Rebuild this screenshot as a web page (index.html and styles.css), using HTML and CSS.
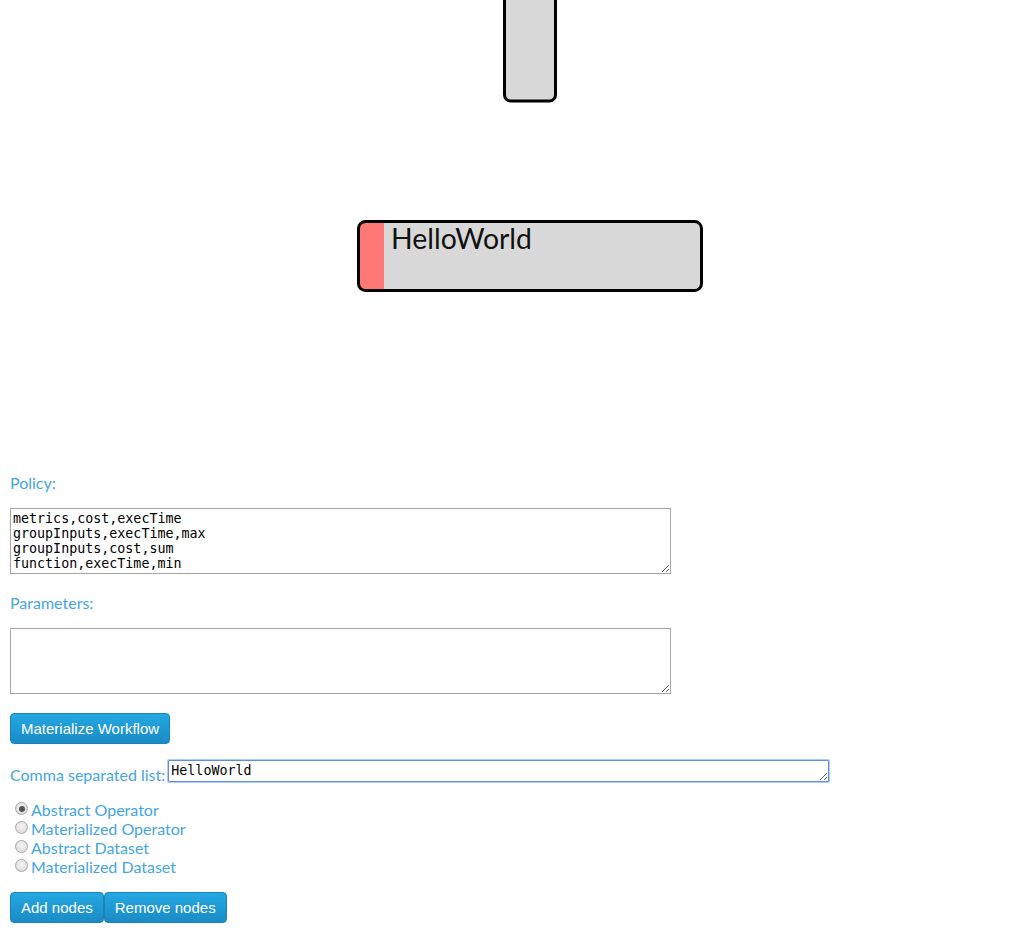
FILE: index.html
```html
<!DOCTYPE html>
<html>
<head>
<meta charset="utf-8">
<link rel="stylesheet" href="styles.css">
</head>
<body>
<div class="canvas">
  <svg class="graph" width="1028" height="463" viewBox="0 0 1028 463">
    <rect x="504.5" y="-20" width="51" height="121" rx="6" ry="6" fill="#d8d8d8" stroke="#000" stroke-width="3"/>
    <g>
      <clipPath id="nodeclip"><rect x="358.5" y="221.5" width="343" height="69" rx="7" ry="7"/></clipPath>
      <rect x="358.5" y="221.5" width="343" height="69" rx="7" ry="7" fill="#d8d8d8"/>
      <rect x="358" y="221" width="26" height="70" fill="#ff7777" clip-path="url(#nodeclip)"/>
      <rect x="358.5" y="221.5" width="343" height="69" rx="7" ry="7" fill="none" stroke="#000" stroke-width="3"/>
      <text x="391" y="249" class="nodetext">HelloWorld</text>
    </g>
  </svg>
</div>
<div class="form">
  <div class="label">Policy:</div>
  <textarea class="area" spellcheck="false">metrics,cost,execTime
groupInputs,execTime,max
groupInputs,cost,sum
function,execTime,min</textarea>
  <div class="label">Parameters:</div>
  <textarea class="area" spellcheck="false"></textarea>
  <button class="btn single">Materialize Workflow</button>
  <div class="listrow">
    <span class="label inline">Comma separated list:</span>
    <textarea class="listinput" rows="1" spellcheck="false">HelloWorld</textarea>
  </div>
  <div class="radios">
    <label class="radio"><span class="dot checked"></span>Abstract Operator</label>
    <label class="radio"><span class="dot"></span>Materialized Operator</label>
    <label class="radio"><span class="dot"></span>Abstract Dataset</label>
    <label class="radio"><span class="dot"></span>Materialized Dataset</label>
  </div>
  <div class="btnrow">
    <button class="btn">Add nodes</button><button class="btn">Remove nodes</button>
  </div>
</div>
</body>
</html>
```
FILE: styles.css
```css
html, body {
  margin: 0;
  padding: 0;
  background: #fff;
  width: 1028px;
  height: 935px;
  overflow: hidden;
}
body {
  font-family: Lato, "Liberation Sans", sans-serif;
}
.canvas {
  height: 473px;
}
.graph {
  display: block;
}
.nodetext {
  font-family: Lato, sans-serif;
  font-size: 28.4px;
  fill: #111;
}
.form {
  padding-left: 10px;
}
.label {
  color: #45a6df;
  font-size: 16px;
  line-height: 20px;
  height: 20px;
}
.area {
  display: block;
  box-sizing: border-box;
  width: 661px;
  height: 66px;
  margin: 15px 0 19px 0;
  padding: 2px 2px;
  border: 1px solid #a6a6a6;
  border-radius: 0;
  font-family: "DejaVu Sans Mono", monospace;
  font-size: 13.333px;
  line-height: 15px;
  color: #000;
  outline: none;
  resize: both;
  overflow: hidden;
}
.btn {
  display: inline-block;
  box-sizing: border-box;
  height: 31px;
  padding: 0 10px;
  margin: 0;
  border: 1px solid #1a83bb;
  border-radius: 4px;
  background: linear-gradient(#24a8e2, #1a8bc6);
  color: #fff;
  font-family: "Liberation Sans", Arial, sans-serif;
  font-size: 15px;
  line-height: 29px;
  cursor: pointer;
}
.btn.single {
  display: block;
}
.listrow {
  display: flex;
  align-items: flex-start;
  margin-top: 16px;
}
.label.inline {
  padding-top: 5px;
  margin-right: 3px;
}
.listinput {
  box-sizing: border-box;
  width: 661px;
  height: 22px;
  margin: 0;
  padding: 1px 2px;
  border: 1px solid #5b8fe0;
  box-shadow: 0 0 0 1px #b4cdf2;
  border-radius: 1px;
  font-family: "DejaVu Sans Mono", monospace;
  font-size: 13.333px;
  line-height: 17px;
  color: #000;
  outline: none;
  resize: both;
  overflow: hidden;
}
.radios {
  margin-top: 15px;
  display: flex;
  flex-direction: column;
}
.radio {
  display: flex;
  align-items: center;
  height: 19px;
  color: #45a6df;
  font-size: 16px;
  line-height: 19px;
}
.dot {
  box-sizing: border-box;
  width: 13px;
  height: 13px;
  margin: 0 3px 2px 5px;
  border-radius: 50%;
  border: 1px solid #a8a8a8;
  background: radial-gradient(circle at 50% 40%, #f4f4f4, #d6d6d6);
  position: relative;
}
.dot.checked::after {
  content: "";
  position: absolute;
  left: 2.5px;
  top: 2.5px;
  width: 6px;
  height: 6px;
  border-radius: 50%;
  background: #555;
}
.btnrow {
  margin-top: 16px;
  display: flex;
}
```
